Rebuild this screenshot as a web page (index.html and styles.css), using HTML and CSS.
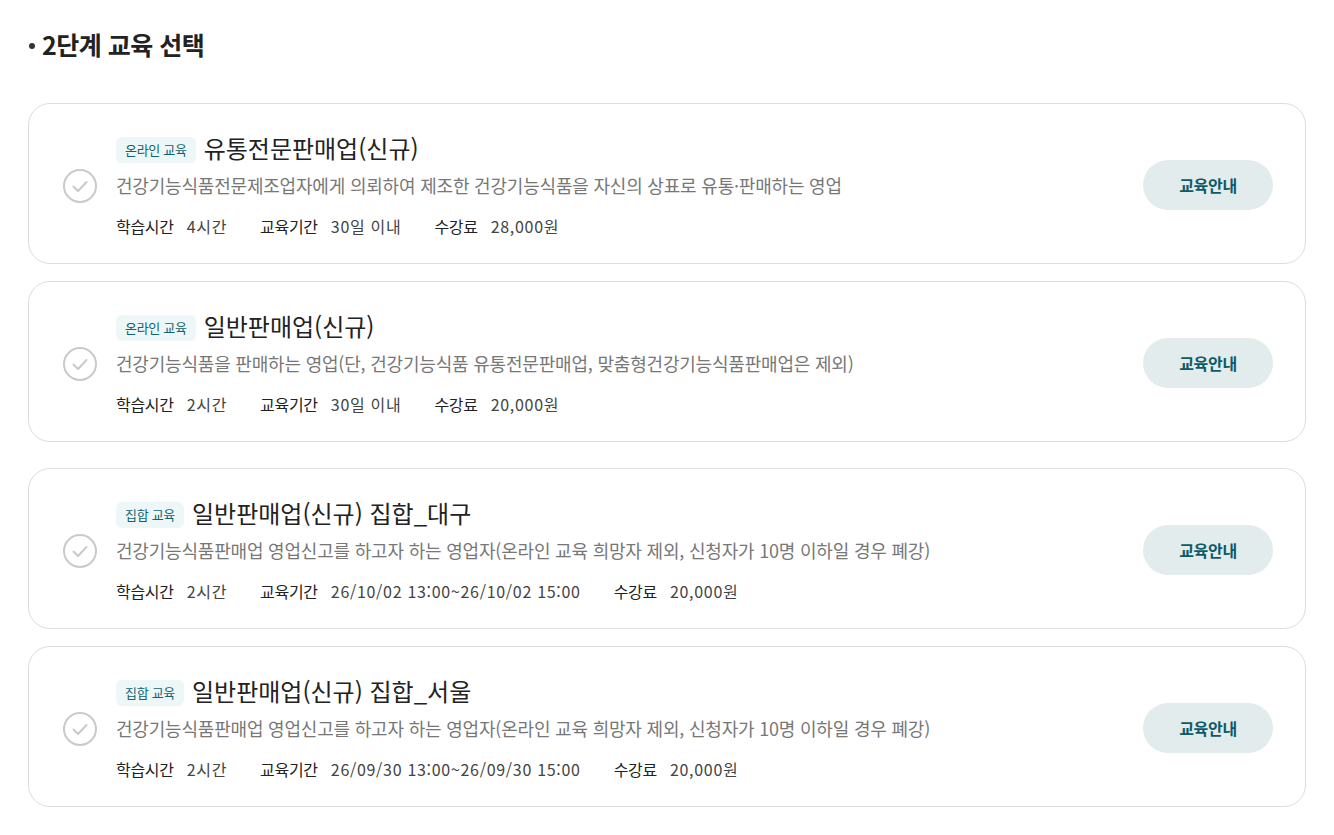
FILE: index.html
```html
<!DOCTYPE html>
<html lang="ko">
<head>
    <meta charset="UTF-8">
    <meta name="viewport" content="width=device-width, initial-scale=1.0">
    <title>2단계 교육 선택</title>
    <link rel="stylesheet" href="styles.css">
</head>
<body>

    <div class="wrap">
        <h2 class="step-title">2단계 교육 선택</h2>

        <!-- 온라인 교육 -->
        <ul class="course-list">
            <li class="course-item">
                <span class="check">
                    <svg width="36" height="36" viewBox="0 0 36 36"><circle cx="18" cy="18" r="16" fill="none" stroke="#c9c9ce" stroke-width="2"/><path d="M11.5 18.5 L16 23 L24.5 14" fill="none" stroke="#c9c9ce" stroke-width="2" stroke-linecap="round" stroke-linejoin="round"/></svg>
                </span>
                <div class="course-info">
                    <div class="course-head">
                        <span class="badge">온라인 교육</span>
                        <h3>유통전문판매업(신규)</h3>
                    </div>
                    <p class="course-desc">건강기능식품전문제조업자에게 의뢰하여 제조한 건강기능식품을 자신의 상표로 유통·판매하는 영업</p>
                    <div class="course-meta">
                        <span><b>학습시간</b>4시간</span>
                        <span><b>교육기간</b>30일 이내</span>
                        <span><b>수강료</b>28,000원</span>
                    </div>
                </div>
                <button class="guide-btn">교육안내</button>
            </li>
            <li class="course-item">
                <span class="check">
                    <svg width="36" height="36" viewBox="0 0 36 36"><circle cx="18" cy="18" r="16" fill="none" stroke="#c9c9ce" stroke-width="2"/><path d="M11.5 18.5 L16 23 L24.5 14" fill="none" stroke="#c9c9ce" stroke-width="2" stroke-linecap="round" stroke-linejoin="round"/></svg>
                </span>
                <div class="course-info">
                    <div class="course-head">
                        <span class="badge">온라인 교육</span>
                        <h3>일반판매업(신규)</h3>
                    </div>
                    <p class="course-desc">건강기능식품을 판매하는 영업(단, 건강기능식품 유통전문판매업, 맞춤형건강기능식품판매업은 제외)</p>
                    <div class="course-meta">
                        <span><b>학습시간</b>2시간</span>
                        <span><b>교육기간</b>30일 이내</span>
                        <span><b>수강료</b>20,000원</span>
                    </div>
                </div>
                <button class="guide-btn">교육안내</button>
            </li>
        </ul>

        <!-- 집합 교육 -->
        <ul class="course-list">
            <li class="course-item">
                <span class="check">
                    <svg width="36" height="36" viewBox="0 0 36 36"><circle cx="18" cy="18" r="16" fill="none" stroke="#c9c9ce" stroke-width="2"/><path d="M11.5 18.5 L16 23 L24.5 14" fill="none" stroke="#c9c9ce" stroke-width="2" stroke-linecap="round" stroke-linejoin="round"/></svg>
                </span>
                <div class="course-info">
                    <div class="course-head">
                        <span class="badge">집합 교육</span>
                        <h3>일반판매업(신규) 집합_대구</h3>
                    </div>
                    <p class="course-desc">건강기능식품판매업 영업신고를 하고자 하는 영업자(온라인 교육 희망자 제외, 신청자가 10명 이하일 경우 폐강)</p>
                    <div class="course-meta">
                        <span><b>학습시간</b>2시간</span>
                        <span><b>교육기간</b>26/10/02 13:00~26/10/02 15:00</span>
                        <span><b>수강료</b>20,000원</span>
                    </div>
                </div>
                <button class="guide-btn">교육안내</button>
            </li>
            <li class="course-item">
                <span class="check">
                    <svg width="36" height="36" viewBox="0 0 36 36"><circle cx="18" cy="18" r="16" fill="none" stroke="#c9c9ce" stroke-width="2"/><path d="M11.5 18.5 L16 23 L24.5 14" fill="none" stroke="#c9c9ce" stroke-width="2" stroke-linecap="round" stroke-linejoin="round"/></svg>
                </span>
                <div class="course-info">
                    <div class="course-head">
                        <span class="badge">집합 교육</span>
                        <h3>일반판매업(신규) 집합_서울</h3>
                    </div>
                    <p class="course-desc">건강기능식품판매업 영업신고를 하고자 하는 영업자(온라인 교육 희망자 제외, 신청자가 10명 이하일 경우 폐강)</p>
                    <div class="course-meta">
                        <span><b>학습시간</b>2시간</span>
                        <span><b>교육기간</b>26/09/30 13:00~26/09/30 15:00</span>
                        <span><b>수강료</b>20,000원</span>
                    </div>
                </div>
                <button class="guide-btn">교육안내</button>
            </li>
        </ul>
    </div>

</body>
</html>
```

FILE: styles.css
```css
body {
    font-family: 'Noto Sans CJK KR', 'Noto Sans', sans-serif;
    margin: 0;
    padding: 0;
    background-color: #fff;
    color: #222;
}
.wrap {
    width: 1278px;
    padding: 26px 0 0 28px;
}
.step-title {
    position: relative;
    margin: 0 0 41px;
    padding-left: 14px;
    font-size: 25px;
    line-height: 36px;
    font-weight: 700;
    letter-spacing: -0.5px;
    color: #222;
}
.step-title::before {
    content: '';
    position: absolute;
    left: 1px;
    top: 17px;
    width: 6px;
    height: 6px;
    border-radius: 50%;
    background-color: #333;
}
.course-list {
    list-style-type: none;
    margin: 0 0 26px;
    padding: 0;
}
.course-item {
    display: flex;
    align-items: center;
    border: 1px solid #dcdce2;
    border-radius: 22px;
    padding: 28px 32px 26px 33px;
    margin-bottom: 17px;
}
.course-item:last-child {
    margin-bottom: 0;
}
.check {
    display: flex;
    width: 36px;
    height: 36px;
    margin-right: 18px;
    margin-top: 2px;
}
.course-info {
    flex: 1;
}
.course-head {
    display: flex;
    align-items: center;
    height: 32px;
}
.badge {
    display: inline-block;
    background-color: #eef7f8;
    color: #0e6470;
    font-size: 13px;
    line-height: 26px;
    padding: 0 9px;
    border-radius: 6px;
    margin: 3px 8px 0 0;
    letter-spacing: -0.3px;
}
.course-head h3 {
    margin: 0;
    font-size: 24px;
    font-weight: 400;
    line-height: 32px;
    color: #222;
}
.course-desc {
    margin: 8px 0 0;
    font-size: 18px;
    line-height: 26px;
    letter-spacing: -0.2px;
    color: #777;
}
.course-meta {
    display: flex;
    gap: 33px;
    margin-top: 17px;
    font-size: 16px;
    line-height: 22px;
    color: #444;
}
.course-meta span {
    letter-spacing: 0.7px;
}
.course-meta b {
    font-weight: 400;
    color: #222;
    margin-right: 13px;
    letter-spacing: -0.3px;
}
.guide-btn {
    width: 130px;
    height: 50px;
    border: none;
    border-radius: 25px;
    background-color: #e3eced;
    color: #0d5b68;
    font-family: inherit;
    font-size: 16px;
    font-weight: 700;
    letter-spacing: -0.3px;
    cursor: pointer;
}
```
